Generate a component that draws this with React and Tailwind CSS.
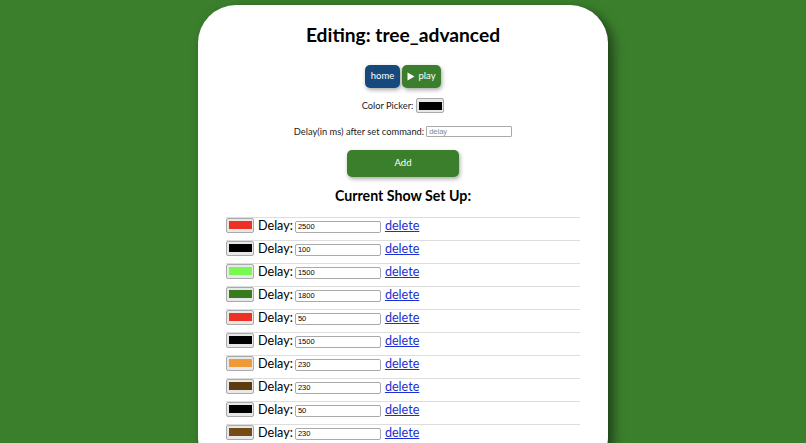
const rows = [
  { color: "#ee3124", delay: "2500" },
  { color: "#000000", delay: "100" },
  { color: "#77f94f", delay: "1500" },
  { color: "#387a1f", delay: "1800" },
  { color: "#ee3124", delay: "50" },
  { color: "#000000", delay: "1500" },
  { color: "#ef9a36", delay: "230" },
  { color: "#5e3a10", delay: "230" },
  { color: "#000000", delay: "50" },
  { color: "#744a16", delay: "230" },
];

function Swatch({ color }) {
  return (
    <span className="flex h-[15px] w-[28px] shrink-0 items-center justify-center rounded-[2px] border border-[#aaa] bg-[#e8e8e8] px-[1.5px] py-[2.5px]">
      <span className="block h-full w-full" style={{ backgroundColor: color }} />
    </span>
  );
}

export default function App() {
  return (
    <div className="h-[443px] overflow-hidden bg-[#3b7f2d] pt-[5px] font-['Lato',sans-serif] text-black">
      <div className="ml-[198px] h-[470px] w-[410px] rounded-[38px] bg-white pt-[18px] shadow-[5px_5px_12px_rgba(0,0,0,0.5)]">
        <h1 className="text-center text-[19.2px] font-bold leading-[23px]">Editing: tree_advanced</h1>

        <div className="mt-[19px] flex justify-center gap-[2px]">
          <button className="h-[23px] w-[35px] rounded-[5px] bg-[#174a7c] text-[9.5px] text-white shadow-[1px_2px_4px_rgba(0,0,0,0.35)]">home</button>
          <button className="flex h-[23px] w-[39px] items-center justify-center gap-[3px] rounded-[5px] bg-[#3b7f2d] text-[9.5px] text-white shadow-[1px_2px_4px_rgba(0,0,0,0.35)]">
            <svg width="8" height="9" viewBox="0 0 8 9"><path d="M0.5 0.5 L7.5 4.5 L0.5 8.5 Z" fill="#fff" /></svg>
            play
          </button>
        </div>

        <div className="mt-[10px] flex items-center justify-center gap-[3px] text-[9.3px] text-[#222]">
          <span>Color Picker:</span>
          <Swatch color="#000000" />
        </div>

        <div className="mt-[12px] flex items-center justify-center gap-[2px] text-[9.3px] text-[#222]">
          <span>Delay(in ms) after set command:</span>
          <input placeholder="delay" className="h-[11px] w-[86px] rounded-[1px] border border-[#aaa] px-[2px] font-['Liberation_Sans',sans-serif] text-[7.5px] placeholder:text-[#888]" />
        </div>

        <button className="mx-auto mt-[11px] block h-[27px] w-[112px] rounded-[5px] bg-[#3b7f2d] text-[9.5px] text-white shadow-[1px_2px_4px_rgba(0,0,0,0.35)]">Add</button>

        <h2 className="mt-[10px] text-center text-[14.2px] font-bold leading-[18px]">Current Show Set Up:</h2>

        <div className="mx-[28px] mt-[12px]">
          {rows.map((row, i) => (
            <div key={i} className="flex h-[23px] items-start border-t border-[#ddd] text-[12.6px]">
              <Swatch color={row.color} />
              <span className="ml-[4px] leading-[15px]">Delay:</span>
              <input defaultValue={row.delay} className="ml-[2px] mt-[3px] h-[12px] w-[86px] rounded-[2px] border border-[#aaa] px-[2px] font-['Liberation_Sans',sans-serif] text-[7.5px]" />
              <a href="#" className="ml-[4px] leading-[15px] text-[#1c2fd0] underline">delete</a>
            </div>
          ))}
        </div>
      </div>
    </div>
  );
}
